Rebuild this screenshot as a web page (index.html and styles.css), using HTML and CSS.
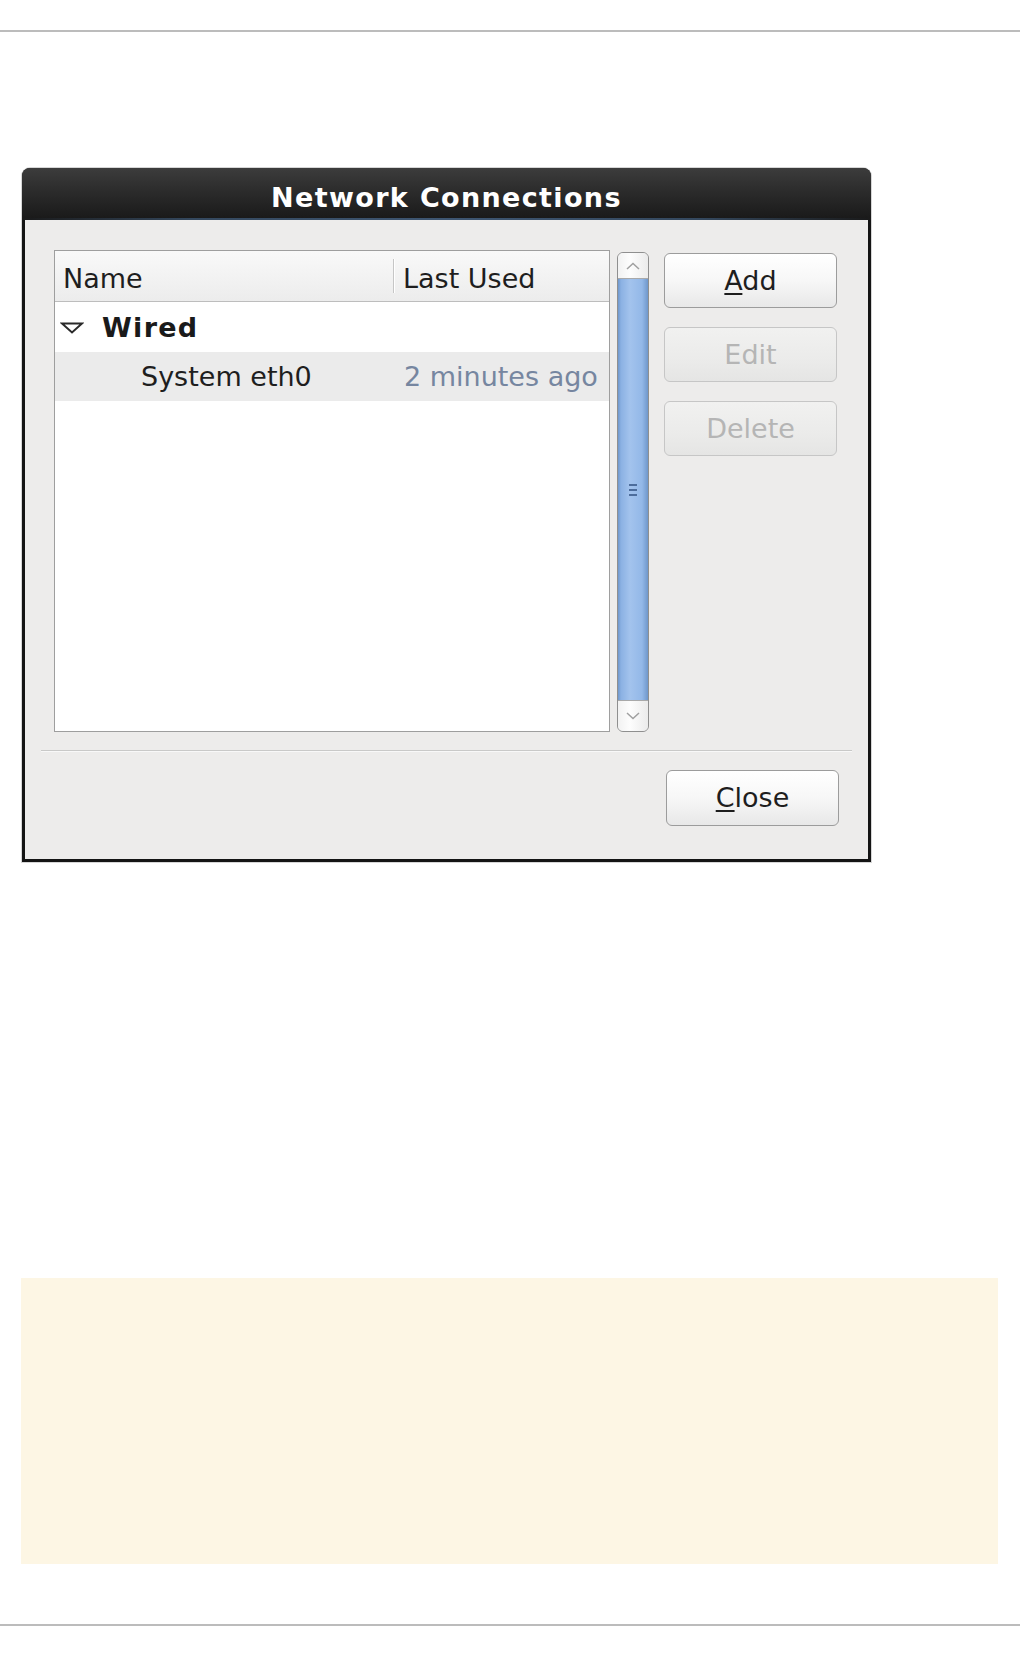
FILE: index.html
```html
<!DOCTYPE html>
<html lang="en">
<head>
<meta charset="utf-8">
<title>Network Connections</title>
<link rel="stylesheet" href="styles.css">
</head>
<body>
<div class="rule rule-top"></div>

<div class="dialog">
  <div class="titlebar">Network Connections</div>
  <div class="titleglow"></div>
  <div class="content">
    <div class="main">
      <div class="tree">
        <div class="tree-head">
          <div class="col col-name">Name</div>
          <div class="col-sep"></div>
          <div class="col col-used">Last Used</div>
        </div>
        <div class="row row-group">
          <svg class="expander" width="24" height="12" viewBox="0 0 24 12"><path d="M2 1.5 L22 1.5 L12 10.5 Z" fill="none" stroke="#2a2a2a" stroke-width="2" stroke-linejoin="miter"/></svg>
          <span class="group-label">Wired</span>
        </div>
        <div class="row row-item">
          <span class="item-name">System eth0</span>
          <span class="item-used">2 minutes ago</span>
        </div>
      </div>
      <div class="scrollbar">
        <div class="sb-btn sb-up">
          <svg width="14" height="8" viewBox="0 0 14 8"><path d="M1 7 L7 1.5 L13 7" fill="none" stroke="#a0a0a0" stroke-width="1.5"/></svg>
        </div>
        <div class="sb-thumb">
          <div class="grip"><span></span><span></span><span></span></div>
        </div>
        <div class="sb-btn sb-down">
          <svg width="14" height="8" viewBox="0 0 14 8"><path d="M1 1 L7 6.5 L13 1" fill="none" stroke="#a0a0a0" stroke-width="1.5"/></svg>
        </div>
      </div>
      <div class="buttons">
        <div class="btn"><span class="mn">A</span>dd</div>
        <div class="btn btn-disabled">Edit</div>
        <div class="btn btn-disabled">Delete</div>
      </div>
    </div>
    <div class="separator"></div>
    <div class="footer">
      <div class="btn btn-close"><span class="mn">C</span>lose</div>
    </div>
  </div>
</div>

<div class="note"></div>

<div class="rule rule-bottom"></div>
</body>
</html>
```

FILE: styles.css
```css
html, body {
  margin: 0;
  padding: 0;
  background: #ffffff;
}

body {
  width: 1020px;
  font-family: "DejaVu Sans", "Liberation Sans", sans-serif;
  font-size: 27px;
  color: #1e1e1e;
}

.rule {
  height: 2px;
  background: #bcbcbc;
}

.rule-top {
  margin-top: 30px;
}

.dialog {
  margin-top: 136px;
  margin-left: 22px;
  width: 849px;
  background: #141414;
  border-radius: 8px 8px 0 0;
  box-shadow: 0 0 0 1px #d6d6d6;
  padding-bottom: 3px;
}

.titlebar {
  height: 43px;
  padding-top: 7px;
  line-height: 46px;
  text-align: center;
  font-weight: bold;
  letter-spacing: 1.35px;
  color: #ffffff;
  border-radius: 8px 8px 0 0;
  background: linear-gradient(#3c3c3c 0%, #2c2c2c 45%, #1a1a1a 100%);
  overflow: visible;
}

.titleglow {
  height: 2px;
  background: linear-gradient(to right, #1a1a1a 0%, #34485e 20%, #3e5672 50%, #34485e 80%, #1a1a1a 100%);
}

.content {
  margin: 0 3px;
  background: #edeceb;
  padding: 30px 0 33px 0;
}

.main {
  display: flex;
  align-items: flex-start;
  padding-left: 29px;
}

.tree {
  width: 554px;
  height: 480px;
  border: 1px solid #9e9e9e;
  background: #ffffff;
}

.tree-head {
  display: flex;
  align-items: center;
  height: 50px;
  border-bottom: 1px solid #bdbdbd;
  background: linear-gradient(#f9f9f9, #ececec);
}

.col {
  height: 45px;
  padding-top: 5px;
  line-height: 45px;
}

.col-name {
  width: 330px;
  padding-left: 8px;
}

.col-sep {
  width: 1px;
  height: 34px;
  background: #c6c6c6;
  box-shadow: 1px 0 0 #ffffff;
}

.col-used {
  padding-left: 9px;
}

.row {
  display: flex;
  align-items: center;
  line-height: 31px;
}

.row-group {
  height: 50px;
}

.expander {
  margin-left: 5px;
  margin-top: 2px;
}

.group-label {
  margin-left: 18px;
  font-weight: bold;
  letter-spacing: 1.3px;
  color: #1a1a1a;
}

.row-item {
  height: 49px;
  background: #ebebeb;
}

.item-name {
  width: 252px;
  padding-left: 86px;
}

.item-used {
  padding-left: 11px;
  color: #7686a0;
}

.scrollbar {
  margin-left: 7px;
  margin-top: 2px;
  width: 30px;
  height: 478px;
  border: 1px solid #8f8f8f;
  border-radius: 6px;
  display: flex;
  flex-direction: column;
  overflow: hidden;
  background: #e4e4e4;
}

.sb-btn {
  display: flex;
  align-items: center;
  justify-content: center;
  background: linear-gradient(to right, #f2f2f2, #fdfdfd 40%, #ebebeb);
}

.sb-up {
  height: 25px;
  border-bottom: 1px solid #a9a9a9;
}

.sb-down {
  height: 30px;
  border-top: 1px solid #a9a9a9;
}

.sb-thumb {
  flex: 1;
  display: flex;
  align-items: center;
  justify-content: center;
  background: linear-gradient(to right, #6f97cb 0px, #8bb1e3 3px, #a3c3ed 12px, #93b8e8 24px, #6f97cb 30px);
}

.grip {
  display: flex;
  flex-direction: column;
  gap: 3px;
}

.grip span {
  display: block;
  width: 8px;
  height: 2px;
  background: #4d6d9c;
}

.buttons {
  margin-left: 15px;
  margin-top: 3px;
  width: 173px;
  display: flex;
  flex-direction: column;
  gap: 19px;
}

.btn {
  box-sizing: border-box;
  height: 55px;
  line-height: 53px;
  text-align: center;
  border: 1px solid #9c9c9c;
  border-radius: 6px;
  background: linear-gradient(#ffffff 0%, #f7f7f7 50%, #e8e8e8 100%);
  color: #1e1e1e;
}

.btn-disabled {
  border-color: #c6c6c6;
  background: linear-gradient(#f1f1f0 0%, #ebebea 60%, #e5e5e4 100%);
  color: #b5b5b5;
}

.mn {
  text-decoration: underline;
  text-decoration-thickness: 2px;
  text-underline-offset: 3px;
}

.separator {
  margin: 18px 16px 0 16px;
  height: 1px;
  background: #c9c9c8;
  border-bottom: 1px solid #f8f8f8;
}

.footer {
  display: flex;
  justify-content: flex-end;
  padding-right: 29px;
  margin-top: 18px;
}

.btn-close {
  width: 173px;
  height: 56px;
  line-height: 54px;
}

.note {
  margin-top: 416px;
  margin-left: 21px;
  width: 977px;
  height: 286px;
  background: #fdf6e4;
}

.rule-bottom {
  margin-top: 60px;
}
```
